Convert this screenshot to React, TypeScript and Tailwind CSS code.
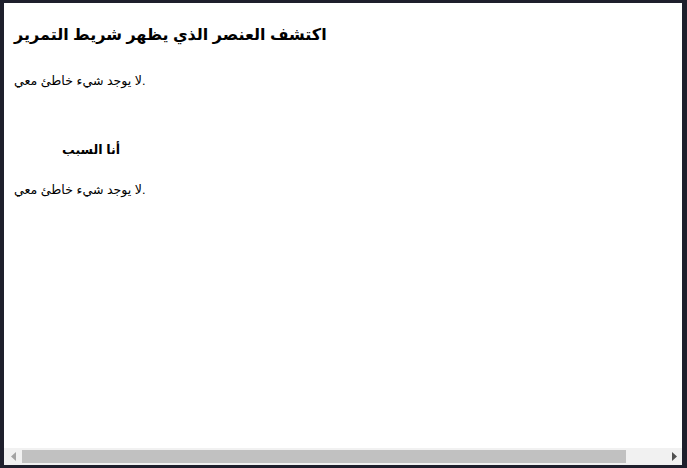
import React from 'react';

const font = "font-['Arial','Liberation_Sans','DejaVu_Sans',sans-serif]";

const ScrollBar: React.FC = () => {
  return (
    <div className="flex h-[17px] items-center bg-[#f1f1f1]">
      <div className="flex w-[18px] justify-center">
        <svg width="5" height="9" viewBox="0 0 5 9">
          <path d="M5 0 L0 4.5 L5 9 Z" fill="#a3a3a3" />
        </svg>
      </div>
      <div className="h-[13px] w-[604px] bg-[#c1c1c1]" />
      <div className="flex-1" />
      <div className="flex w-[16px] justify-center">
        <svg width="5" height="9" viewBox="0 0 5 9">
          <path d="M0 0 L5 4.5 L0 9 Z" fill="#505050" />
        </svg>
      </div>
    </div>
  );
};

const App: React.FC = () => {
  return (
    <div className="h-[468px] w-[687px] bg-[#1e1f2c] pt-[3px] pl-[4px] pr-[5px] pb-[3px]">
      <div className={`flex h-full flex-col bg-white text-black ${font}`}>
        <div className="flex-1 px-[10px] pt-[20px]" dir="ltr">
          <h1 className="text-[16px] leading-[24px] font-bold">اكتشف العنصر الذي يظهر شريط التمرير</h1>
          <p className="mt-[26px] text-[12.6px] leading-[16px]">لا يوجد شيء خاطئ معي.</p>
          <h2 className="ml-[48px] mt-[52px] text-[12.7px] leading-[18px] font-bold">أنا السبب</h2>
          <p className="mt-[23px] text-[12.6px] leading-[16px]">لا يوجد شيء خاطئ معي.</p>
        </div>
        <ScrollBar />
      </div>
    </div>
  );
};

export default App;
